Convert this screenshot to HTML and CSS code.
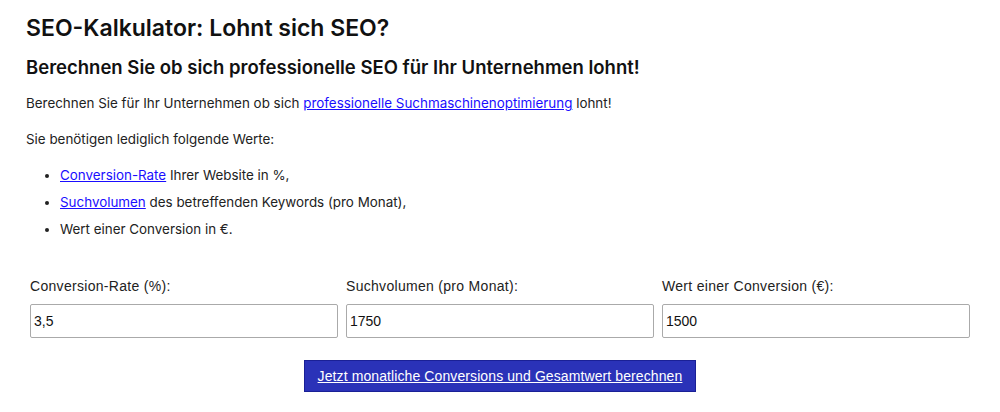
FILE: index.html
```html
<!DOCTYPE html>
<html lang="de">
<head>
    <meta charset="UTF-8">
    <meta name="viewport" content="width=device-width, initial-scale=1.0">
    <title>SEO-Kalkulator</title>
    <link rel="stylesheet" href="styles.css">
</head>
<body>
    <div class="content">
        <h1>SEO-Kalkulator: Lohnt sich SEO?</h1>
        <h2>Berechnen Sie ob sich professionelle SEO für Ihr Unternehmen lohnt!</h2>
        <p>Berechnen Sie für Ihr Unternehmen ob sich <a href="#">professionelle Suchmaschinenoptimierung</a> lohnt!</p>
        <p>Sie benötigen lediglich folgende Werte:</p>
        <ul>
            <li><a href="#">Conversion-Rate</a> Ihrer Website in %,</li>
            <li><a href="#">Suchvolumen</a> des betreffenden Keywords (pro Monat),</li>
            <li>Wert einer Conversion in €.</li>
        </ul>
        <div class="calculator">
            <div class="fields">
                <div class="field">
                    <label for="rate">Conversion-Rate (%):</label>
                    <input type="text" id="rate" value="3,5">
                </div>
                <div class="field">
                    <label for="volume">Suchvolumen (pro Monat):</label>
                    <input type="text" id="volume" value="1750">
                </div>
                <div class="field">
                    <label for="value">Wert einer Conversion (€):</label>
                    <input type="text" id="value" value="1500">
                </div>
            </div>
            <div class="actions">
                <button class="calc-button">Jetzt monatliche Conversions und Gesamtwert berechnen</button>
            </div>
        </div>
    </div>
</body>
</html>
```

FILE: styles.css
```css
body {
    font-family: Inter, "Noto Sans", sans-serif;
    font-size: 13.4px;
    line-height: 21px;
    color: #222;
    background-color: #fff;
    margin: 0;
    padding: 0;
}
.content {
    padding: 14px 26px 0;
}
h1 {
    font-size: 23px;
    line-height: 28px;
    font-weight: 600;
    margin: 0 0 13px;
    color: #111;
}
h2 {
    font-size: 18.5px;
    line-height: 24px;
    font-weight: 600;
    margin: 0 0 14px;
    color: #111;
}
p {
    margin: 0 0 15px;
}
a {
    color: #1a0dff;
}
ul {
    margin: 0;
    padding-left: 34px;
}
ul li {
    margin-bottom: 6px;
}
.calculator {
    padding: 30px 4px 0;
}
.fields {
    display: flex;
    gap: 8px;
}
.field {
    flex: 1;
    display: flex;
    flex-direction: column;
}
.field label {
    font-family: "Liberation Sans", Arial, sans-serif;
    font-size: 14px;
    letter-spacing: 0.3px;
    margin-bottom: 7px;
}
.field input {
    font-family: "Liberation Sans", Arial, sans-serif;
    font-size: 14px;
    height: 34px;
    box-sizing: border-box;
    padding: 0 3px;
    border: 1px solid #aaa;
    border-radius: 2px;
    color: #111;
}
.actions {
    display: flex;
    justify-content: center;
    margin-top: 22px;
}
.calc-button {
    font-family: "Liberation Sans", Arial, sans-serif;
    font-size: 14px;
    letter-spacing: 0.1px;
    color: white;
    text-decoration: underline;
    background-color: #2a32b8;
    border: 1px solid #1a2096;
    padding: 0 13px;
    height: 32px;
    cursor: pointer;
}
```
